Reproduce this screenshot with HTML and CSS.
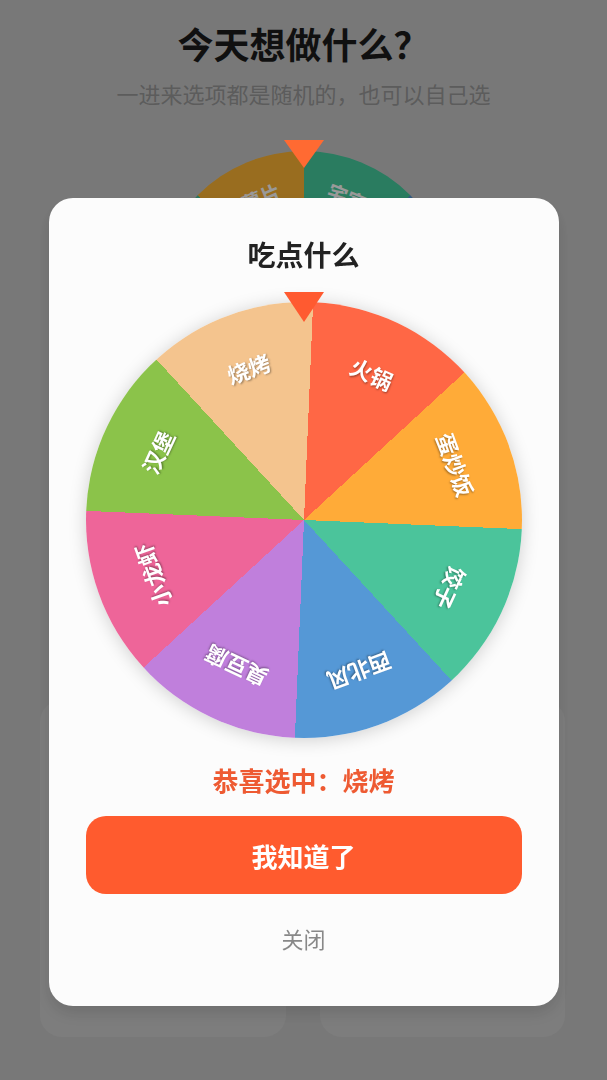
FILE: index.html
```html
<!DOCTYPE html>
<html lang="zh-CN">
<head>
  <meta charset="UTF-8" />
  <meta name="viewport" content="width=device-width, initial-scale=1.0"/>
  <title>今天想做什么</title>
  <link rel="stylesheet" href="styles.css">
</head>
<body>

  <main class="page">
    <h1>今天想做什么？</h1>
    <p class="sub">一进来选项都是随机的，也可以自己选</p>

    <div class="bg-wheel-wrap">
      <div class="bg-pointer"></div>
      <div class="bg-wheel">
        <span class="bg-label" style="--a:-22.5deg">薯片</span>
        <span class="bg-label" style="--a:22.5deg">宅家</span>
        <span class="bg-label" style="--a:67.5deg">看书</span>
        <span class="bg-label" style="--a:112.5deg">跑步</span>
        <span class="bg-label" style="--a:157.5deg">追剧</span>
        <span class="bg-label" style="--a:202.5deg">睡觉</span>
        <span class="bg-label" style="--a:247.5deg">逛街</span>
        <span class="bg-label" style="--a:292.5deg">游戏</span>
      </div>
    </div>

    <button class="spin">开始转动</button>

    <div class="cards">
      <div class="card">
        <h3>吃点什么</h3>
      </div>
      <div class="card">
        <h3>玩点什么</h3>
      </div>
    </div>
  </main>

  <div class="mask">
    <div class="dialog">
      <h2>吃点什么</h2>

      <div class="wheel-wrap">
        <div class="pointer"></div>
        <div class="wheel">
          <span class="label" style="--a:24.9deg">火锅</span>
          <span class="label" style="--a:69.9deg">蛋炒饭</span>
          <span class="label" style="--a:114.9deg">饺子</span>
          <span class="label" style="--a:159.9deg">西北风</span>
          <span class="label" style="--a:204.9deg">臭豆腐</span>
          <span class="label" style="--a:249.9deg">小龙虾</span>
          <span class="label" style="--a:294.9deg">汉堡</span>
          <span class="label" style="--a:339.9deg">烧烤</span>
        </div>
      </div>

      <p class="result">恭喜选中：烧烤</p>
      <button class="ok">我知道了</button>
      <button class="close">关闭</button>
    </div>
  </div>

</body>
</html>
```

FILE: styles.css
```css
* {
  box-sizing: border-box;
  margin: 0;
  padding: 0;
  font-family: "Noto Sans CJK SC", "Noto Sans", sans-serif;
}
body {
  background: #c9c9c9;
  min-height: 100vh;
}

/* page behind the dialog */
.page {
  display: flex;
  flex-direction: column;
  align-items: center;
  padding-top: 18px;
}
h1 {
  font-size: 36px;
  line-height: 50px;
  font-weight: 700;
  color: #1c1c1c;
}
.sub {
  margin-top: 10px;
  font-size: 22px;
  line-height: 30px;
  color: #999;
}
.bg-wheel-wrap {
  position: relative;
  margin-top: 43px;
}
.bg-pointer {
  position: absolute;
  top: -11px;
  left: 50%;
  margin-left: -20px;
  border-left: 20px solid transparent;
  border-right: 20px solid transparent;
  border-top: 28px solid #ff6a32;
  z-index: 2;
}
.bg-wheel {
  position: relative;
  width: 300px;
  height: 300px;
  border-radius: 50%;
  background: conic-gradient(#46cfa0 0deg 45deg, #5598d6 45deg 90deg, #ee6599 90deg 135deg,
    #8bc34a 135deg 180deg, #c07fdc 180deg 225deg, #ff6b45 225deg 270deg,
    #4bc49b 270deg 315deg, #ffb634 315deg 360deg);
}
.bg-label {
  position: absolute;
  left: 50%;
  top: 50%;
  transform: translate(-50%, -50%) rotate(var(--a)) translateY(-112px);
  color: #fff;
  font-size: 20px;
  font-weight: 700;
  line-height: 1;
  white-space: nowrap;
}
.spin {
  margin-top: 30px;
  width: 300px;
  height: 60px;
  border: none;
  border-radius: 30px;
  background: #ff5b2e;
  color: #fff;
  font-size: 22px;
  font-weight: 700;
}
.cards {
  display: grid;
  grid-template-columns: 1fr 1fr;
  gap: 34px;
  width: 100%;
  padding: 0 42px 0 40px;
  margin-top: 159px;
}
.card {
  height: 337px;
  background: #d1d1d1;
  border-radius: 22px;
  padding: 20px;
}
.card h3 {
  font-size: 22px;
  color: #333;
}

/* dialog */
.mask {
  position: fixed;
  inset: 0;
  background: rgba(0, 0, 0, 0.4);
  display: flex;
  justify-content: center;
  align-items: flex-start;
  padding-top: 198px;
}
.dialog {
  width: 510px;
  height: 808px;
  background: #fcfcfc;
  border-radius: 24px;
  display: flex;
  flex-direction: column;
  align-items: center;
  padding-top: 36px;
  box-shadow: 0 8px 16px rgba(0, 0, 0, 0.12);
}
.dialog h2 {
  font-size: 28px;
  line-height: 40px;
  font-weight: 700;
  color: #222;
}
.wheel-wrap {
  position: relative;
  margin-top: 28px;
}
.pointer {
  position: absolute;
  top: -10px;
  left: 50%;
  margin-left: -20px;
  border-left: 20px solid transparent;
  border-right: 20px solid transparent;
  border-top: 30px solid #ff5a30;
  z-index: 2;
}
.wheel {
  position: relative;
  width: 436px;
  height: 436px;
  border-radius: 50%;
  background: conic-gradient(from 2.4deg,
    #ff6745 0deg 45deg,
    #ffab38 45deg 90deg,
    #4bc49b 90deg 135deg,
    #5598d6 135deg 180deg,
    #c07fdc 180deg 225deg,
    #ee6599 225deg 270deg,
    #8bc34a 270deg 315deg,
    #f4c48e 315deg 360deg);
  box-shadow: 0 2px 18px rgba(0, 0, 0, 0.18);
}
.label {
  position: absolute;
  left: 50%;
  top: 50%;
  transform: translate(-50%, -50%) rotate(var(--a)) translateY(-162px);
  color: #fff;
  font-size: 22px;
  font-weight: 700;
  line-height: 1;
  white-space: nowrap;
  text-shadow: 1px 1px 2px rgba(0, 0, 0, 0.35);
}
.result {
  margin-top: 24px;
  font-size: 26px;
  line-height: 36px;
  font-weight: 700;
  color: #ee5a32;
}
.ok {
  margin-top: 18px;
  width: 436px;
  height: 78px;
  border: none;
  border-radius: 20px;
  background: #ff5b2e;
  color: #fff;
  font-size: 26px;
  font-weight: 700;
  cursor: pointer;
}
.close {
  margin-top: 29px;
  background: none;
  border: none;
  font-size: 22px;
  line-height: 30px;
  color: #888;
  cursor: pointer;
}
```
